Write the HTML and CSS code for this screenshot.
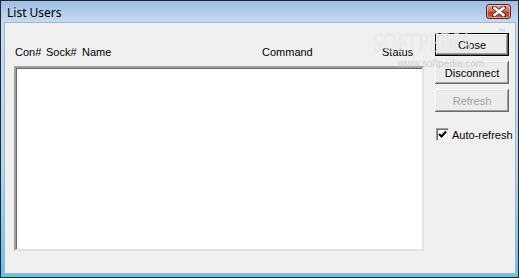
FILE: index.html
```html
<!DOCTYPE html>
<html>
<head>
<meta charset="utf-8">
<link rel="stylesheet" href="styles.css">
</head>
<body>
<div class="window">
  <div class="titlebar">
    <span class="title">List Users</span>
    <div class="close-x">
      <svg width="14" height="11" viewBox="0 0 14 11">
        <path d="M2 1.5 L12 9.5 M12 1.5 L2 9.5" stroke="#5a2a22" stroke-width="4" stroke-linecap="square"/>
        <path d="M2.5 2 L11.5 9 M11.5 2 L2.5 9" stroke="#ffffff" stroke-width="2.4" stroke-linecap="square"/>
      </svg>
    </div>
  </div>
  <div class="client">
    <div class="left">
      <div class="headers">
        <span class="h-con">Con#</span>
        <span class="h-sock">Sock#</span>
        <span class="h-name">Name</span>
        <span class="h-cmd">Command</span>
        <span class="h-status">Status</span>
      </div>
      <div class="listbox"></div>
    </div>
    <div class="right">
      <button class="btn focused">Close</button>
      <button class="btn">Disconnect</button>
      <button class="btn disabled">Refresh</button>
      <label class="check">
        <span class="box">
          <svg width="9" height="9" viewBox="0 0 9 9"><path d="M1 4 L3.5 6.5 L8 1.5" fill="none" stroke="#000" stroke-width="2"/></svg>
        </span>
        <span class="check-label">Auto-refresh</span>
      </label>
    </div>
    <div class="wm-big">SOFTPEDIA</div>
    <div class="wm-tm">™</div>
    <div class="wm-small">www.softpedia.com</div>
  </div>
</div>
</body>
</html>
```
FILE: styles.css
```css
html, body {
  margin: 0;
  padding: 0;
  background: #ffffff;
}
.window {
  width: 519px;
  height: 278px;
  box-sizing: border-box;
  border: 1px solid #1b2a3a;
  border-bottom-color: #0d2c38;
  background: linear-gradient(to bottom, #9ebde0 0px, #b6cfea 12px, #c6dcf1 22px, #b8d4ee 60%, #62c4ea 100%);
  display: flex;
  flex-direction: column;
  position: relative;
  overflow: hidden;
}
.titlebar {
  height: 21px;
  display: flex;
  align-items: center;
  position: relative;
  flex: none;
}
.title {
  font-family: "Noto Sans", "DejaVu Sans", sans-serif;
  font-size: 12px;
  color: #000;
  margin-left: 6px;
  margin-top: 1px;
}
.close-x {
  position: absolute;
  left: 485px;
  top: 3px;
  width: 25px;
  height: 15px;
  box-sizing: border-box;
  border: 1px solid #5b2720;
  border-radius: 3px;
  background: linear-gradient(to bottom, #e8a08c 0%, #d2705c 45%, #b8402c 55%, #c85a40 100%);
  box-shadow: inset 0 0 0 1px rgba(255,230,220,0.5);
  display: flex;
  align-items: center;
  justify-content: center;
}
.client {
  flex: 1;
  margin: 0 2px 3px 3px;
  background: #f0f0f0;
  border: 1px solid #9fb6cf;
  display: flex;
  font-family: "Liberation Sans", Arial, sans-serif;
  font-size: 11px;
  color: #000;
  position: relative;
  overflow: hidden;
}
.left {
  margin-left: 9px;
  width: 410px;
  display: flex;
  flex-direction: column;
}
.headers {
  height: 43px;
  box-sizing: border-box;
  padding-top: 23px;
  display: flex;
  line-height: 13px;
}
.headers span { flex: none; }
.h-con { margin-left: 1px; width: 31px; }
.h-sock { width: 36px; }
.h-name { width: 180px; }
.h-cmd { width: 120px; }
.listbox {
  width: 410px;
  height: 185px;
  box-sizing: border-box;
  background: #fff;
  border-style: solid;
  border-width: 2px;
  border-color: #a0a0a0 #e3e3e3 #e3e3e3 #a0a0a0;
  box-shadow: inset 1px 1px 0 #696969;
}
.right {
  margin-left: 11px;
  display: flex;
  flex-direction: column;
  padding-top: 10px;
  width: 74px;
}
.btn {
  width: 74px;
  height: 23px;
  margin-bottom: 5px;
  font-family: "Liberation Sans", Arial, sans-serif;
  font-size: 11px;
  color: #000;
  background: #ececec;
  border: none;
  padding: 0;
  box-shadow: inset -1px -1px 0 #696969, inset 1px 1px 0 #ffffff, inset -2px -2px 0 #a0a0a0, inset 2px 2px 0 #e3e3e3;
}
.btn.focused {
  border: 1px solid #000;
}
.btn.disabled {
  color: #a0a0a0;
}
.check {
  display: flex;
  align-items: center;
  margin-top: 11px;
  margin-left: 1px;
  gap: 3px;
  white-space: nowrap;
  width: 80px;
}
.check-label {
  flex: none;
}
.box {
  flex: none;
  width: 13px;
  height: 13px;
  box-sizing: border-box;
  background: #fff;
  border-style: solid;
  border-width: 1px;
  border-color: #a0a0a0 #ffffff #ffffff #a0a0a0;
  box-shadow: inset 1px 1px 0 #696969, inset -1px -1px 0 #e3e3e3;
  display: flex;
  align-items: center;
  justify-content: center;
}
.wm-big {
  position: absolute;
  left: 368px;
  top: 4px;
  font-family: "Liberation Serif", serif;
  font-size: 30px;
  line-height: 30px;
  transform: scaleX(0.62);
  transform-origin: left top;
  color: rgba(255,255,255,0.6);
  text-shadow: 0 0 1px rgba(150,150,150,0.35);
  pointer-events: none;
}
.wm-tm {
  position: absolute;
  left: 492px;
  top: 4px;
  font-family: "Liberation Sans", sans-serif;
  font-size: 8px;
  color: rgba(180,180,180,0.6);
}
.wm-small {
  position: absolute;
  left: 393px;
  top: 35px;
  font-family: "Liberation Sans", sans-serif;
  font-size: 10px;
  color: rgba(200,200,200,0.8);
  pointer-events: none;
}
```
